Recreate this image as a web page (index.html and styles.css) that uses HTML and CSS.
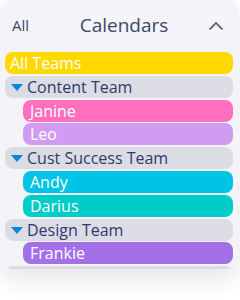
FILE: index.html
```html
<!DOCTYPE html>
<html>
<head>
<meta charset="utf-8">
<link rel="stylesheet" href="styles.css">
</head>
<body>
<div class="panel">
  <div class="header">
    <span class="all">All</span>
    <span class="title">Calendars</span>
    <svg class="chev" width="16" height="10" viewBox="0 0 16 10"><path d="M1.5 8.5 L8 2 L14.5 8.5" fill="none" stroke="#55555f" stroke-width="1.7"/></svg>
  </div>
  <div class="list">
    <div class="row allteams">All Teams</div>
    <div class="row team"><span class="tri"></span>Content Team</div>
    <div class="row member pink">Janine</div>
    <div class="row member lav">Leo</div>
    <div class="row team"><span class="tri"></span>Cust Success Team</div>
    <div class="row member cyan">Andy</div>
    <div class="row member teal">Darius</div>
    <div class="row team"><span class="tri"></span>Design Team</div>
    <div class="row member purple">Frankie</div>
    <div class="row team"></div>
  </div>
</div>
</body>
</html>
```
FILE: styles.css
```css
html, body { margin: 0; padding: 0; background: #ffffff; }
body { font-family: "Open Sans", "Noto Sans", sans-serif; width: 240px; height: 300px; overflow: hidden; }
.panel {
  width: 238px;
  height: 269px;
  background: #f4f4f8;
  border-radius: 12px;
  box-shadow: 0 10px 22px rgba(50, 50, 90, 0.12);
  display: flex;
  flex-direction: column;
  overflow: hidden;
}
.header {
  height: 52px;
  flex: none;
  display: flex;
  align-items: center;
  padding: 0 14px 0 12px;
  box-sizing: border-box;
  color: #3b4869;
}
.all { font-size: 15px; width: 30px; margin-top: -2px; }
.title { flex: 1; text-align: center; font-size: 19px; margin-top: -2px; padding-right: 2px; }
.chev { display: block; margin-top: 0px; }
.list {
  flex: 1;
  overflow: hidden;
  padding: 0 5px;
  display: flex;
  flex-direction: column;
  gap: 1.8px;
}
.row {
  flex: none;
  height: 22px;
  line-height: 22px;
  border-radius: 8px;
  font-size: 16px;
  color: #ffffff;
  padding-left: 6px;
  white-space: nowrap;
}
.allteams { background: #ffd800; padding-left: 5px; }
.team { background: #dcdce4; color: #2c3b6b; display: flex; align-items: center; padding-left: 6px; }
.tri {
  width: 0; height: 0;
  border-left: 6px solid transparent;
  border-right: 6px solid transparent;
  border-top: 7px solid #0a86d6;
  margin-right: 4px;
  margin-top: 1px;
}
.member { margin-left: 18px; padding-left: 7px; }
.pink { background: #ff6fbe; }
.lav { background: #d09cf2; }
.cyan { background: #00c4e6; }
.teal { background: #00ccc8; }
.purple { background: #a470e8; }
```
